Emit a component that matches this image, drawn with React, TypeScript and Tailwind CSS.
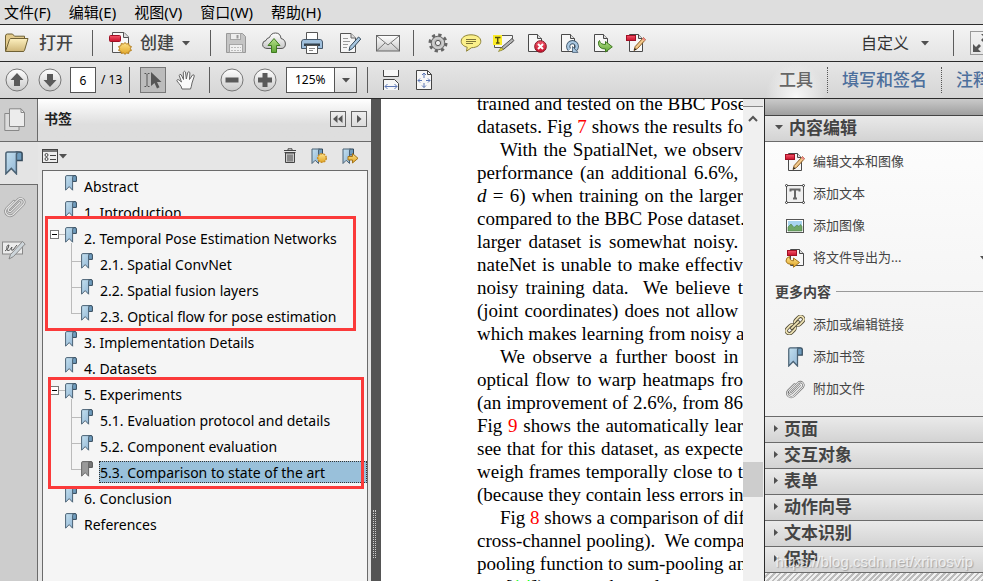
import type { ReactNode } from "react";

type IconProps = { w: number; h: number; children: ReactNode };

function Icon({ w, h, children }: IconProps) {
  return (
    <svg width={w} height={h} viewBox={`0 0 ${w} ${h}`} fill="none" className="shrink-0" aria-hidden="true">
      {children}
    </svg>
  );
}

function Gradients() {
  return (
    <svg width="0" height="0" className="absolute" aria-hidden="true">
      <defs>
        <linearGradient id="ribbon" x1="0" y1="0" x2="1" y2="1">
          <stop offset="0" stopColor="#c4e0ef" />
          <stop offset="1" stopColor="#8fb4d4" />
        </linearGradient>
        <linearGradient id="folder" x1="0" y1="0" x2="0" y2="1">
          <stop offset="0" stopColor="#fdf0c0" />
          <stop offset="1" stopColor="#cfb678" />
        </linearGradient>
        <linearGradient id="steel" x1="0" y1="0" x2="0" y2="1">
          <stop offset="0" stopColor="#ffffff" />
          <stop offset="1" stopColor="#c9c9c9" />
        </linearGradient>
        <linearGradient id="green" x1="0" y1="0" x2="0" y2="1">
          <stop offset="0" stopColor="#b6e08a" />
          <stop offset="1" stopColor="#5fa535" />
        </linearGradient>
        <linearGradient id="gold" x1="0" y1="0" x2="0" y2="1">
          <stop offset="0" stopColor="#ffe38a" />
          <stop offset="1" stopColor="#e0a526" />
        </linearGradient>
        <linearGradient id="red" x1="0" y1="0" x2="0" y2="1">
          <stop offset="0" stopColor="#f4566a" />
          <stop offset="1" stopColor="#c8102a" />
        </linearGradient>
      </defs>
    </svg>
  );
}

function Ribbon({ w = 12, h = 16, gray = false }: { w?: number; h?: number; gray?: boolean }) {
  return (
    <svg width={w} height={h} viewBox="0 0 12 16" className="shrink-0" aria-hidden="true">
      <path d="M7.5 .6H10q1.4 0 1.4 1.2V6.4H7.5z" fill={gray ? "#777" : "#6f9cbd"} stroke={gray ? "#555" : "#34495a"} />
      <path d="M.6 1.8Q.6.6 1.8.6H9Q7.6.9 7.6 2.4V15.2L4.2 11.6.6 15.2z" fill={gray ? "#999" : "url(#ribbon)"} stroke={gray ? "#666" : "#4b6274"} />
    </svg>
  );
}

function FolderIcon() {
  return (
    <Icon w={25} h={20}>
      <path d="M1.5 18V3Q1.5 1 3.5 1H8.500l2 2.200H20.500V7" fill="#e3cb8c" stroke="#6f6135" />
      <path d="M1.500 18.500 5.500 6.500Q6 5.500 7 5.500H24L20.500 17.500Q20.200 18.500 19 18.500Z" fill="url(#folder)" stroke="#6f6135" />
    </Icon>
  );
}

function PageBase() {
  return (
    <g transform="translate(1 0)">
      <path d="M.5 1.500H9.500L13.500 5.500V18.500H.5z" fill="#f7f7f7" stroke="#4a4a4a" />
      <path d="M9.500 1.500V5.500H13.500" fill="#ddd" stroke="#4a4a4a" />
    </g>
  );
}

function CreateIcon() {
  return (
    <Icon w={24} h={24}>
      <path d="M4.500 1.500H16L20.500 6V21.500H4.500z" fill="#f8f8f8" stroke="#555" />
      <path d="M15.500 1.500V6.500H20.500" fill="#ddd" stroke="#555" />
      <rect x="1.500" y="4.500" width="11" height="6" rx="1" fill="url(#red)" stroke="#a01024" />
      <path d="M17 11.500l1.500 1.600 2.200-.6.4 2.200 2.300.8-1 2 1 2-2.300.8-.4 2.200-2.200-.6L17 23.400l-1.500-1.500-2.200.6-.4-2.200-2.300-.8 1-2-1-2 2.300-.8.4-2.200 2.200.6z" fill="url(#gold)" stroke="#b27c1c" />
    </Icon>
  );
}

function SaveIcon() {
  return (
    <Icon w={22} h={22}>
      <path d="M1.500 1.500H17.500L20.500 4.500V20.500H1.500z" fill="#c5c5c5" stroke="#999" />
      <rect x="5.500" y="1.500" width="10" height="6" fill="#ededed" stroke="#a5a5a5" />
      <path d="M12.500 3v3.500" stroke="#999" strokeWidth="2" />
      <rect x="4.500" y="12.500" width="13" height="8" fill="#efefef" stroke="#a5a5a5" />
      <path d="M6 15.500h10M6 18.500h10" stroke="#bbb" strokeDasharray="2 1" />
    </Icon>
  );
}

function CloudIcon() {
  return (
    <Icon w={24} h={22}>
      <path d="M6 16.500Q.6 16.500.6 12.500.6 9 4 8.500 4.500 6 7.500 5.500 9 1 13.500 1 18.500 1 19 6.500 23.400 7.500 23.400 12 23.400 16.500 19 16.500z" fill="url(#steel)" stroke="#555" />
      <path d="M12 6.500 18 13.500H14.500V20.500H9.500V13.500H6z" fill="url(#green)" stroke="#3f7a20" />
    </Icon>
  );
}

function PrinterIcon() {
  return (
    <Icon w={24} h={24}>
      <path d="M6.500 9V1.500H17.500V9" fill="#fff" stroke="#555" />
      <path d="M3.500 8.500H20.500Q22.500 9 22.500 11V17.500H1.500V11Q1.500 9 3.500 8.500z" fill="#9fbfdc" stroke="#46586a" />
      <path d="M4 12.500H20V15H4z" fill="#33414d" />
      <path d="M6.500 14.500H17.500V22.500H6.500z" fill="#fff" stroke="#555" />
      <path d="M9 17.500h6M9 19.500h4" stroke="#888" />
    </Icon>
  );
}

function SignDocIcon() {
  return (
    <Icon w={24} h={22}>
      <path d="M2.500 1.500H13L17.500 6V20.500H2.500z" fill="#f6f6f6" stroke="#555" />
      <path d="M13 1.500V6H17.500" fill="#ddd" stroke="#666" />
      <path d="M5 6.500h5M5 9.500h7M5 12.500h5M5 15.500h4" stroke="#999" />
      <path d="M20.500 5 22.800 7 14.500 16.500 11 18.500 12 14.500z" fill="#a9c8e2" stroke="#34495a" />
    </Icon>
  );
}

function MailIcon() {
  return (
    <Icon w={24} h={17}>
      <rect x=".5" y=".5" width="23" height="15.500" fill="url(#steel)" stroke="#666" />
      <path d="M1 1 12 10 23 1M1 15.500 9 8M23 15.500 15 8" stroke="#777" />
    </Icon>
  );
}

function GearIcon() {
  return (
    <Icon w={20} h={20}>
      <circle cx="10" cy="10" r="8" stroke="#666" strokeWidth="3" strokeDasharray="3.200 3.080" />
      <circle cx="10" cy="10" r="6.800" fill="#bdbdbd" stroke="#666" />
      <circle cx="10" cy="10" r="5" stroke="#d8d8d8" />
      <circle cx="10" cy="10" r="2.600" fill="#eee" stroke="#555" />
    </Icon>
  );
}

function CommentIcon() {
  return (
    <Icon w={22} h={18}>
      <path d="M11 .8C17 .8 20.800 3.600 20.800 7.300S17 13.600 11.500 13.700L6.500 17.200 7.200 13.200C3.500 12.300 1.200 10 1.200 7.300 1.200 3.600 5 .8 11 .8z" fill="#fbf08a" stroke="#8f8437" />
      <path d="M6 5.500h10M6 7.500h10M6 9.500h7" stroke="#7d7539" />
    </Icon>
  );
}

function HighlightIcon() {
  return (
    <Icon w={22} h={18}>
      <path d="M1.500 1.500H19.500V8L12 13.500H1.500z" fill="#f5f5f5" stroke="#555" />
      <path d="M0 1H9V11H0z" fill="#fbec27" />
      <path d="M2 3.500H7.500M4.700 3.500V9M3 9H6.500" stroke="#55500a" strokeWidth="1.400" />
      <path d="M19 4.500 21 6.500 11 15 8 16 9 13z" fill="#b5b5b5" stroke="#555" />
      <path d="M5.500 17.500 8 13.500 10.500 15.500z" fill="#e8dc3b" stroke="#77701b" strokeWidth=".6" />
    </Icon>
  );
}

function DocDeleteIcon() {
  return (
    <Icon w={20} h={20}>
      <PageBase />
      <circle cx="13.500" cy="13.500" r="5.800" fill="url(#red)" stroke="#7d1420" />
      <path d="M11 11 16 16M16 11 11 16" stroke="#fff" strokeWidth="2" />
    </Icon>
  );
}

function DocRefreshIcon() {
  return (
    <Icon w={20} h={20}>
      <PageBase />
      <path d="M9.500 16.500A4.300 4.300 0 1 1 15.500 16.500" stroke="#3f566b" strokeWidth="4.200" />
      <path d="M9.500 16.500A4.300 4.300 0 1 1 15.500 16.500" stroke="#a9c8e2" strokeWidth="2.400" />
      <path d="M12.500 19.400V13.500L18 19.400z" fill="#a9c8e2" stroke="#3f566b" strokeWidth=".8" />
    </Icon>
  );
}

function DocExportIcon() {
  return (
    <Icon w={20} h={20}>
      <PageBase />
      <path d="M6.500 7.500Q7 11.500 12.500 11.500V8.500L19.300 13.800 12.500 19V16Q5 16 5.500 9z" fill="url(#green)" stroke="#3f7a20" />
    </Icon>
  );
}

function PdfEditIcon() {
  return (
    <Icon w={20} h={20}>
      <path d="M3.500 1.500H12.500L16.500 5.500V18.500H3.500z" fill="#f7f7f7" stroke="#4a4a4a" />
      <path d="M12.500 1.500V5.500H16.500" fill="#ddd" stroke="#4a4a4a" />
      <rect x=".5" y="2.500" width="9" height="5" fill="url(#red)" stroke="#a01024" />
      <path d="M17.500 4.500 19.500 6.700 11.500 15.500 8 17.500 9.200 13.500z" fill="#f3c98c" stroke="#8a5c22" />
      <path d="M8 17.600 8.800 15 10.500 16.500z" fill="#222" />
      <path d="M16.200 5.800 18.300 8 19.600 6.600 17.500 4.300z" fill="#e88" />
    </Icon>
  );
}

function TextBoxIcon() {
  return (
    <Icon w={20} h={20}>
      <rect x="1.500" y="1.500" width="17" height="17" fill="#f0f0f0" stroke="#555" />
      <path d="M5.500 7.500V5.500H14.500V7.500M10 5.500V14.500M8 14.500H12" stroke="#666" strokeWidth="2" />
      <g fill="#fff" stroke="#333">
        <circle cx="1.500" cy="1.500" r="1" />
        <circle cx="18.500" cy="1.500" r="1" />
        <circle cx="1.500" cy="18.500" r="1" />
        <circle cx="18.500" cy="18.500" r="1" />
      </g>
    </Icon>
  );
}

function ImageIcon() {
  return (
    <Icon w={20} h={16}>
      <rect x="1.500" y="1.500" width="17" height="13" fill="#fff" stroke="#555" />
      <rect x="3" y="3" width="14" height="10" fill="#a8d4ee" />
      <path d="M3 13V9L6 6 9 9.500 12 7 14 8.500 15.500 6.500 17 8.500V13z" fill="#6fa765" stroke="#4c7c48" strokeWidth=".6" />
    </Icon>
  );
}

function ExportIcon() {
  return (
    <Icon w={20} h={20}>
      <path d="M5.500 1.500H14.500L18.500 5.500V17.500H5.500z" fill="#f7f7f7" stroke="#4a4a4a" />
      <path d="M14.500 1.500V5.500H18.500" fill="#ddd" stroke="#4a4a4a" />
      <rect x="2.500" y="2.500" width="9" height="5" fill="url(#red)" stroke="#a01024" />
      <path d="M4.500 8.500Q1 9.500 1 13 1.500 16.500 8.500 16.500V19.300L14.500 14.500 8.500 10V12.800Q4.500 13 4.500 8.500z" fill="url(#gold)" stroke="#a3741a" />
    </Icon>
  );
}

function LinkIcon() {
  return (
    <Icon w={20} h={20}>
      <g transform="rotate(-45 10 10)">
        <rect x="-1" y="7" width="10" height="6" rx="3" stroke="#4d4733" strokeWidth="3.400" />
        <rect x="-1" y="7" width="10" height="6" rx="3" stroke="#efe3b5" strokeWidth="1.800" />
        <rect x="11" y="7" width="10" height="6" rx="3" stroke="#4d4733" strokeWidth="3.400" />
        <rect x="11" y="7" width="10" height="6" rx="3" stroke="#efe3b5" strokeWidth="1.800" />
        <path d="M5.500 10H14.500" stroke="#4d4733" strokeWidth="3.400" strokeLinecap="round" />
        <path d="M5.500 10H14.500" stroke="#efe3b5" strokeWidth="1.800" strokeLinecap="round" />
      </g>
    </Icon>
  );
}

function ClipIcon({ size = 20, dim = false }: { size?: number; dim?: boolean }) {
  const d = "M14.500 6.500 7.200 13.800Q6 15 5 14 4 13 5.200 11.800L13 4Q15.500 2 17.500 4T17.500 8.500L9 17Q6 19.300 3.500 17T3.300 11.500L9.500 5.300";
  return (
    <svg width={size} height={size} viewBox="0 0 20 20" fill="none" className="shrink-0" aria-hidden="true">
      <path d={d} stroke={dim ? "#888" : "#666"} strokeWidth="2.200" strokeLinecap="round" />
      <path d={d} stroke="#e4e4e4" strokeWidth="1.100" strokeLinecap="round" />
    </svg>
  );
}

function Caret() {
  return (
    <Icon w={8} h={5}>
      <path d="M0 0H8L4 4.500z" fill="#505050" />
    </Icon>
  );
}

function Separator() {
  return <span className="h-[26px] w-px shrink-0 bg-[#5c5c5c]" />;
}

function ToolButton({ label, children }: { label: string; children: ReactNode }) {
  return (
    <button type="button" aria-label={label} className="flex h-[27px] w-6 shrink-0 items-center justify-center">
      {children}
    </button>
  );
}

function RoundButton({ label, d }: { label: string; d: string }) {
  return (
    <ToolButton label={label}>
      <Icon w={24} h={24}>
        <circle cx="12" cy="12" r="11" fill="url(#steel)" stroke="#777" />
        <path d={d} fill="#5a5a5a" />
      </Icon>
    </ToolButton>
  );
}

const menus = ["文件(F)", "编辑(E)", "视图(V)", "窗口(W)", "帮助(H)"];

function MenuBar() {
  return (
    <nav className="flex h-[25px] shrink-0 items-center gap-[18px] border-b border-[#2b2b2b] bg-[#dedede] pl-1 text-[15px] text-black">
      {menus.map((m) => (
        <button key={m} type="button" className="leading-[22px] whitespace-nowrap">
          {m}
        </button>
      ))}
    </nav>
  );
}

function MainToolbar() {
  return (
    <div className="flex h-[37px] shrink-0 items-center overflow-hidden border-b border-[#2b2b2b] bg-linear-to-b from-[#f4f4f4] to-[#e3e3e3] pl-1 text-[17px] font-medium text-[#444]">
      <button type="button" className="flex shrink-0 items-center gap-[10px]">
        <FolderIcon />
        打开
      </button>
      <span className="w-[19px] shrink-0" />
      <Separator />
      <button type="button" className="ml-[15px] flex shrink-0 items-center gap-2">
        <CreateIcon />
        创建
        <Caret />
      </button>
      <span className="w-5 shrink-0" />
      <Separator />
      <div className="ml-[13px] flex gap-[14px]">
        <ToolButton label="保存"><SaveIcon /></ToolButton>
        <ToolButton label="上传"><CloudIcon /></ToolButton>
        <ToolButton label="打印"><PrinterIcon /></ToolButton>
        <ToolButton label="签名"><SignDocIcon /></ToolButton>
        <ToolButton label="邮件"><MailIcon /></ToolButton>
      </div>
      <span className="w-[13px] shrink-0" />
      <Separator />
      <div className="ml-3 flex gap-[9px]">
        <ToolButton label="设置"><GearIcon /></ToolButton>
        <ToolButton label="附注"><CommentIcon /></ToolButton>
        <ToolButton label="高亮文本"><HighlightIcon /></ToolButton>
        <ToolButton label="删除页面"><DocDeleteIcon /></ToolButton>
        <ToolButton label="旋转页面"><DocRefreshIcon /></ToolButton>
        <ToolButton label="提取页面"><DocExportIcon /></ToolButton>
        <ToolButton label="编辑文本和图像"><PdfEditIcon /></ToolButton>
      </div>
      <button type="button" className="ml-auto flex shrink-0 items-center gap-3 text-[16px] font-normal text-[#333]">
        自定义
        <Caret />
      </button>
      <span className="w-6 shrink-0" />
      <Separator />
      <button type="button" aria-label="阅读模式" className="ml-4 flex h-6 w-[13px] shrink-0 items-center overflow-hidden border border-r-0 border-[#999]">
        <Icon w={20} h={22}>
          <path d="M2 20V12L5 15 8 12 10 14 7 17 10 20zM18 2V10L15 7 12 10 10 8 13 5 10 2z" fill="#555" />
        </Icon>
      </button>
    </div>
  );
}

function ViewToolbar() {
  return (
    <div className="flex h-[37px] shrink-0 items-center overflow-hidden border-b border-[#2b2b2b] bg-linear-to-b from-[#e6e6e6] to-[#d5d5d5] pl-[5px] text-[13px]">
      <div className="flex gap-[9px]">
        <RoundButton label="上一页" d="M12 5 18.500 12H15V18H9V12H5.500z" />
        <RoundButton label="下一页" d="M12 19 5.500 12H9V6H15V12H18.500z" />
      </div>
      <input aria-label="页码" defaultValue="6" className="ml-2 h-[26px] w-[26px] shrink-0 border border-[#555] bg-white text-center text-[12px] text-black" />
      <span className="ml-[5px] w-7 shrink-0 whitespace-nowrap text-[12px] text-black">/ 13</span>
      <Separator />
      <button type="button" aria-label="选择工具" className="ml-[10px] flex h-[26px] w-[26px] shrink-0 items-center justify-center border border-[#777] bg-[#bcbcbc]">
        <Icon w={20} h={20}>
          <path d="M1.500 3.500H3L4 4.500 5 3.500H6.500M4 4.500V15.500M1.500 16.500H3L4 15.500 5 16.500H6.500" stroke="#555" />
          <path d="M8 2V16L11.500 13 14 18.500 16.500 17.300 14 12H18.500z" fill="#555" />
        </Icon>
      </button>
      <button type="button" aria-label="手形工具" className="ml-2 flex h-[26px] w-6 shrink-0 items-center justify-center">
        <Icon w={20} h={20}>
          <path d="M6 19Q5.500 16 3 13.500L.8 10.800Q1 9 2.800 9.800L5.500 12 3.200 5.500Q3.600 3.600 5.200 4.800L7.500 9.500 7.300 2.200Q8.300.4 9.500 2L10.300 9 11.800 2.300Q13 .9 13.900 2.600L13.500 9.500 16.500 5Q18.300 4.200 18.300 6L16 13Q15.500 16.500 14.500 19z" fill="#fafafa" stroke="#666" />
        </Icon>
      </button>
      <span className="w-[11px] shrink-0" />
      <Separator />
      <div className="ml-[10px] flex gap-[9px]">
        <RoundButton label="缩小" d="M5.500 9.500H18.500V14.500H5.500z" />
        <RoundButton label="放大" d="M9.500 5H14.500V9.500H19V14.500H14.500V19H9.500V14.500H5V9.500H9.500z" />
      </div>
      <label className="ml-[9px] flex h-[26px] w-[71px] shrink-0 items-stretch border border-[#555] bg-white">
        <select aria-label="缩放" className="w-[47px] appearance-none pl-2 text-[12px] text-black">
          <option>125%</option>
        </select>
        <span className="flex flex-1 items-center justify-center border-l border-[#555] bg-linear-to-b from-[#f4f4f4] to-[#dcdcdc]">
          <Caret />
        </span>
      </label>
      <span className="w-[10px] shrink-0" />
      <Separator />
      <div className="ml-[11px] flex gap-[9px]">
        <ToolButton label="适合宽度">
          <Icon w={18} h={20}>
            <path d="M1.500 0V6.500H16.500V0" fill="#f7f7f7" stroke="#444" />
            <path d="M1.500 20V9.500H12.500L16.500 13.500V20" fill="#f7f7f7" stroke="#444" />
            <path d="M3 16.500H15M5.500 14 3 16.500 5.500 19M12.500 14 15 16.500 12.500 19" stroke="#5b76b5" />
          </Icon>
        </ToolButton>
        <ToolButton label="适合页面">
          <Icon w={18} h={20}>
            <path d="M1.500.5H12.500L16.500 4.500V19.500H1.500z" fill="#f7f7f7" stroke="#444" />
            <path d="M12.500.5V4.500H16.500" stroke="#444" />
            <path d="M3 10.500H7M11 10.500H15M9 3V8M9 13V17.500M5 8.500 3 10.500 5 12.500M13 8.500 15 10.500 13 12.500M7 5 9 3 11 5M7 15.500 9 17.500 11 15.500" stroke="#5b76b5" />
          </Icon>
        </ToolButton>
      </div>
      <div className="ml-auto flex shrink-0 items-center text-[17px] font-medium text-[#4c6f9c]">
        <button type="button" className="flex h-9 items-center bg-[radial-gradient(ellipse_at_bottom,#f8f8f8,transparent_70%)] px-[14px] text-[#666]">
          工具
        </button>
        <button type="button" className="border-l border-dotted border-[#555] px-[14px]">
          填写和签名
        </button>
        <button type="button" className="w-[42px] overflow-hidden border-l border-dotted border-[#555] pl-[14px] whitespace-nowrap">
          注释
        </button>
      </div>
    </div>
  );
}

function NavStrip() {
  return (
    <nav className="flex w-[38px] shrink-0 flex-col bg-[#cdcdcd]">
      <button type="button" aria-label="页面缩略图" className="flex h-[43px] items-center border-r border-b border-[#6b6b6b] pl-1">
        <Icon w={22} h={24}>
          <path d="M.8 5.500H15V22.500H.8z" fill="#dcdcdc" stroke="#888" />
          <path d="M5.500.8H17L20.500 4.500V18.500H5.500z" fill="#ececec" stroke="#888" />
          <path d="M17 .8V4.500H20.500" stroke="#888" />
        </Icon>
      </button>
      <button type="button" aria-label="书签" className="flex h-[43px] items-center border-b border-[#6b6b6b] bg-[#e4e4e4] pl-[5px]">
        <Ribbon w={18} h={24} />
      </button>
      <div className="flex flex-1 flex-col border-r border-[#6b6b6b]">
        <button type="button" aria-label="附件" className="flex h-[43px] items-center pl-[3px]">
          <ClipIcon size={23} dim />
        </button>
        <button type="button" aria-label="签名" className="flex h-[43px] items-center pl-[2px]">
          <Icon w={24} h={20}>
            <rect x=".5" y="2" width="20" height="12" fill="#ececec" stroke="#888" />
            <path d="M3 11Q7 9 7 5 4 5 5 10 7 12 10 7 8 11 11 10L15 5" stroke="#555" />
            <path d="M20.500 1.500 23.200 4 11.500 16.500 7 19 8.500 14.500z" fill="#cdd5da" stroke="#888" />
          </Icon>
        </button>
      </div>
    </nav>
  );
}

type Item = { title: string; selected?: boolean; children?: Item[] };

const outline: Item[] = [
  { title: "Abstract" },
  { title: "1. Introduction" },
  {
    title: "2. Temporal Pose Estimation Networks",
    children: [
      { title: "2.1. Spatial ConvNet" },
      { title: "2.2. Spatial fusion layers" },
      { title: "2.3. Optical flow for pose estimation" },
    ],
  },
  { title: "3. Implementation Details" },
  { title: "4. Datasets" },
  {
    title: "5. Experiments",
    children: [
      { title: "5.1. Evaluation protocol and details" },
      { title: "5.2. Component evaluation" },
      { title: "5.3. Comparison to state of the art", selected: true },
    ],
  },
  { title: "6. Conclusion" },
  { title: "References" },
];

function OutlineTree() {
  return (
    <ul className="pt-[3px] text-[14px] leading-[26px] text-black">
      {outline.map((item) => (
        <li key={item.title}>
          <div className="flex h-[26px]">
            <span className="flex w-[22px] shrink-0 items-start pt-1 pl-[7px]">
              {item.children && (
                <>
                  <button type="button" aria-label="折叠" className="flex h-[9px] w-[9px] shrink-0 items-center justify-center border border-[#777] bg-white">
                    <span className="h-px w-[5px] bg-black" />
                  </button>
                  <span className="mt-1 h-px flex-1 bg-[#bbb]" />
                </>
              )}
            </span>
            <span className="flex w-[19px] shrink-0 flex-col pt-px">
              <Ribbon />
              {item.children && <span className="ml-[6px] flex-1 border-l border-[#bbb]" />}
            </span>
            <span className="whitespace-nowrap">{item.title}</span>
          </div>
          {item.children && (
            <ul>
              {item.children.map((child, i) => (
                <li key={child.title} className="flex h-[26px] pl-7">
                  <span className="flex w-[10px] shrink-0 flex-col">
                    <span className="h-[10px] border-b border-l border-[#bbb]" />
                    {i < item.children!.length - 1 && <span className="flex-1 border-l border-[#bbb]" />}
                  </span>
                  <span className="w-[18px] shrink-0 pt-px">
                    <Ribbon gray={child.selected} />
                  </span>
                  <span
                    className={
                      child.selected
                        ? "mt-px h-[22px] flex-1 border border-dotted border-[#333] bg-[#99c0da] leading-[22px] whitespace-nowrap"
                        : "pl-px whitespace-nowrap"
                    }
                  >
                    {child.title}
                  </span>
                </li>
              ))}
            </ul>
          )}
        </li>
      ))}
    </ul>
  );
}

function BookmarkPanel() {
  return (
    <aside className="flex w-[333px] shrink-0 flex-col bg-[#e6e6e6]">
      <div className="flex h-[43px] shrink-0 items-center gap-[5px] border-b border-[#6b6b6b] bg-linear-to-b from-white to-[#dedede] to-60% pr-1 pb-[2px] pl-[6px]">
        <h2 className="flex-1 text-[14px] leading-5 font-bold text-[#222]">书签</h2>
        <button type="button" aria-label="收起" className="flex h-4 w-4 items-center justify-center border border-[#666]">
          <Icon w={10} h={8}>
            <path d="M4.500 0V8L0 4zM9.500 0V8L5 4z" fill="#555" />
          </Icon>
        </button>
        <button type="button" aria-label="展开" className="flex h-4 w-4 items-center justify-center border border-[#666]">
          <Icon w={6} h={8}>
            <path d="M1 0V8L5.500 4z" fill="#555" />
          </Icon>
        </button>
      </div>
      <div className="flex h-7 shrink-0 items-center pr-3 pl-1">
        <button type="button" aria-label="选项" className="flex items-center gap-px">
          <Icon w={16} h={16}>
            <rect x=".5" y="1.500" width="15" height="13" fill="#eee" stroke="#444" />
            <path d="M1 3H15" stroke="#777" strokeWidth="2" />
            <circle cx="4.500" cy="7" r="1.500" stroke="#444" />
            <circle cx="4.500" cy="11" r="1.500" stroke="#444" />
            <path d="M8 7.500H14M8 11.500H14" stroke="#444" />
          </Icon>
          <Caret />
        </button>
        <div className="ml-auto flex items-center gap-[14px]">
          <button type="button" aria-label="删除">
            <Icon w={14} h={16}>
              <path d="M5 2V.8H9V2M1 2.500H13M1.500 4.500H12.500" stroke="#444" />
              <path d="M2.500 5H11.500V14.500H2.500z" fill="#ccc" stroke="#444" />
              <path d="M5 6.500V13.500M7 6.500V13.500M9 6.500V13.500" stroke="#444" />
            </Icon>
          </button>
          <button type="button" aria-label="新建书签">
            <Icon w={17} h={17}>
              <path d="M7.500 1H11.500V7H7.500z" fill="#6f9cbd" stroke="#34495a" />
              <path d="M1 1H8.500Q7.500 1.500 7.500 3V15.500L4.200 12.300 1 15.500z" fill="url(#ribbon)" stroke="#4b6274" />
              <circle cx="11" cy="10" r="4.300" fill="url(#gold)" stroke="#c8902a" strokeWidth="1.500" strokeDasharray="2 1" />
            </Icon>
          </button>
          <button type="button" aria-label="定位书签">
            <Icon w={17} h={17}>
              <path d="M7.500 1H11.500V7H7.500z" fill="#6f9cbd" stroke="#34495a" />
              <path d="M1 1H8.500Q7.500 1.500 7.500 3V15.500L4.200 12.300 1 15.500z" fill="url(#ribbon)" stroke="#4b6274" />
              <path d="M6 8.500H10.500V5.500L16 10.300 10.500 15V12H6z" fill="url(#gold)" stroke="#a3741a" />
            </Icon>
          </button>
        </div>
      </div>
      <div className="relative mr-[3px] ml-1 flex-1 border border-b-0 border-[#6b6b6b] bg-[#f5f5f5]">
        <OutlineTree />
        <div className="pointer-events-none absolute top-[45px] left-[2px] h-[115px] w-[311px] border-3 border-[#fb3a3a]" />
        <div className="pointer-events-none absolute top-[206px] left-[5px] h-[112px] w-[316px] border-3 border-[#fb3a3a]" />
      </div>
    </aside>
  );
}

function FigureLink({ n }: { n: string }) {
  return (
    <a href="#figures" className="text-[#f00]">
      {n}
    </a>
  );
}

type Line = { text: ReactNode; indent?: boolean; last?: boolean };

const paper: Line[] = [
  { text: "trained and tested on the BBC Pose\u00a0" },
  { text: <>datasets. Fig <FigureLink n="7" /> shows the results fo</> },
  { text: "With the SpatialNet, we observ", indent: true },
  { text: "performance (an additional 6.6%,\u00a0" },
  { text: <><i>d</i> = 6) when training on the larger</> },
  { text: "compared to the BBC Pose dataset." },
  { text: "larger dataset is somewhat noisy.\u00a0" },
  { text: "nateNet is unable to make effectiv" },
  { text: "noisy training data.\u00a0 We believe t" },
  { text: "(joint coordinates) does not allow\u00a0" },
  { text: "which makes learning from noisy a" },
  { text: "We observe a further boost in\u00a0", indent: true },
  { text: "optical flow to warp heatmaps fro" },
  { text: "(an improvement of 2.6%, from 86" },
  { text: <>Fig <FigureLink n="9" /> shows the automatically lear</> },
  { text: "see that for this dataset, as expecte" },
  { text: "weigh frames temporally close to t" },
  { text: "(because they contain less errors in" },
  { text: <>Fig <FigureLink n="8" /> shows a comparison of dif</>, indent: true },
  { text: "cross-channel pooling).\u00a0 We compa" },
  { text: "pooling function to sum-pooling an" },
  { text: <>out [<a href="#references" className="text-[#0f0]">14</a>]) across channels</>, last: true },
];

function DocumentView() {
  return (
    <main className="min-w-0 flex-1 overflow-hidden bg-white pl-24">
      <article className="-mt-[7px] w-[266px] font-['Liberation_Serif',serif] text-[19px] leading-[23px] text-black">
        {paper.map((line, i) => (
          <p
            key={i}
            className={`${line.indent ? "pl-[23px]" : ""} ${line.last ? "text-left" : "text-justify [text-align-last:justify]"} whitespace-nowrap`}
          >
            {line.text}
          </p>
        ))}
      </article>
    </main>
  );
}

function ScrollBar() {
  return (
    <div className="flex w-[21px] shrink-0 flex-col items-center bg-[#f0f0f0] pr-px">
      <span className="h-2 w-full border-b border-[#888] bg-[#e8e8e8]" />
      <button type="button" aria-label="向上滚动" className="flex h-[22px] items-center">
        <Icon w={10} h={7}>
          <path d="M1 6 5 2 9 6" stroke="#555" strokeWidth="2" />
        </Icon>
      </button>
      <span className="flex-[333]" />
      <span className="h-[35px] w-full bg-[#cdcdcd]" />
      <span className="flex-[84]" />
    </div>
  );
}

const editTools = [
  { label: "编辑文本和图像", icon: <PdfEditIcon /> },
  { label: "添加文本", icon: <TextBoxIcon /> },
  { label: "添加图像", icon: <ImageIcon /> },
  { label: "将文件导出为...", icon: <ExportIcon />, menu: true },
];

const moreTools = [
  { label: "添加或编辑链接", icon: <LinkIcon /> },
  { label: "添加书签", icon: <Ribbon w={15} h={20} /> },
  { label: "附加文件", icon: <ClipIcon /> },
];

const sections = ["页面", "交互对象", "表单", "动作向导", "文本识别", "保护"];

function ToolRow({ label, icon, menu }: { label: string; icon: ReactNode; menu?: boolean }) {
  return (
    <button type="button" className="flex h-8 w-full items-center overflow-hidden pl-5 text-[13px] text-[#444]">
      <span className="flex w-5 shrink-0 justify-center">{icon}</span>
      <span className="ml-2 flex-1 text-left whitespace-nowrap">{label}</span>
      {menu && <span className="w-[3px] overflow-hidden"><Caret /></span>}
    </button>
  );
}

function ToolsPanel() {
  return (
    <aside className="relative flex w-[219px] shrink-0 flex-col overflow-hidden border-l border-[#2b2b2b] bg-[#f0f0f0]">
      <div className="h-[17px] shrink-0 border-b border-[#444] bg-linear-to-b from-[#cacaca] to-[#9f9f9f]" />
      <button type="button" className="flex h-[26px] shrink-0 items-center gap-[6px] border-b border-[#6b6b6b] bg-linear-to-b from-[#e9e9e9] to-[#d3d3d3] pb-[2px] pl-[10px] text-[17px] leading-[22px] font-bold text-[#444]">
        <Caret />
        内容编辑
      </button>
      <div className="h-[274px] shrink-0 bg-linear-to-b from-[#fcfcfc] to-[#f0f0f0] pt-1">
        {editTools.map((t) => (
          <ToolRow key={t.label} {...t} />
        ))}
        <h3 className="flex h-[35px] items-center gap-[5px] pl-[10px] text-[14px] font-bold text-[#444]">
          更多内容
          <span className="h-px flex-1 bg-[#999]" />
        </h3>
        {moreTools.map((t) => (
          <ToolRow key={t.label} {...t} />
        ))}
      </div>
      {sections.map((s) => (
        <button key={s} type="button" className="flex h-[26px] shrink-0 items-center gap-[6px] border-t border-[#6b6b6b] bg-linear-to-b from-[#eaeaea] to-[#d3d3d3] pb-[2px] pl-[9px] text-[17px] leading-[22px] font-bold text-[#444]">
          <Icon w={4} h={7}>
            <path d="M0 0V7L4 3.500z" fill="#505050" />
          </Icon>
          {s}
        </button>
      ))}
      <div className="min-h-0 flex-1 border-t border-[#6b6b6b] bg-[repeating-linear-gradient(135deg,#f0f0f0_0_2px,#bcbcbc_2px_4px)]" />
      <span className="pointer-events-none absolute right-[10px] bottom-[10px] font-['Liberation_Sans',sans-serif] text-[15px] leading-[18px] whitespace-nowrap text-white/70 [text-shadow:1px_1px_1px_rgba(0,0,0,0.25)]">
        https://blog.csdn.net/xrinosvip
      </span>
    </aside>
  );
}

export default function App() {
  return (
    <div className="flex h-screen flex-col overflow-hidden bg-[#dedede] font-['Noto_Sans','Noto_Sans_CJK_SC',sans-serif]">
      <Gradients />
      <MenuBar />
      <MainToolbar />
      <ViewToolbar />
      <div className="flex min-h-0 flex-1">
        <NavStrip />
        <BookmarkPanel />
        <div className="flex w-[10px] shrink-0 items-end bg-[#555] pb-[23px] pl-[2px]">
          <span className="h-12 w-[3px] border-x border-dotted border-[#ccc]" />
        </div>
        <DocumentView />
        <ScrollBar />
        <ToolsPanel />
      </div>
    </div>
  );
}
